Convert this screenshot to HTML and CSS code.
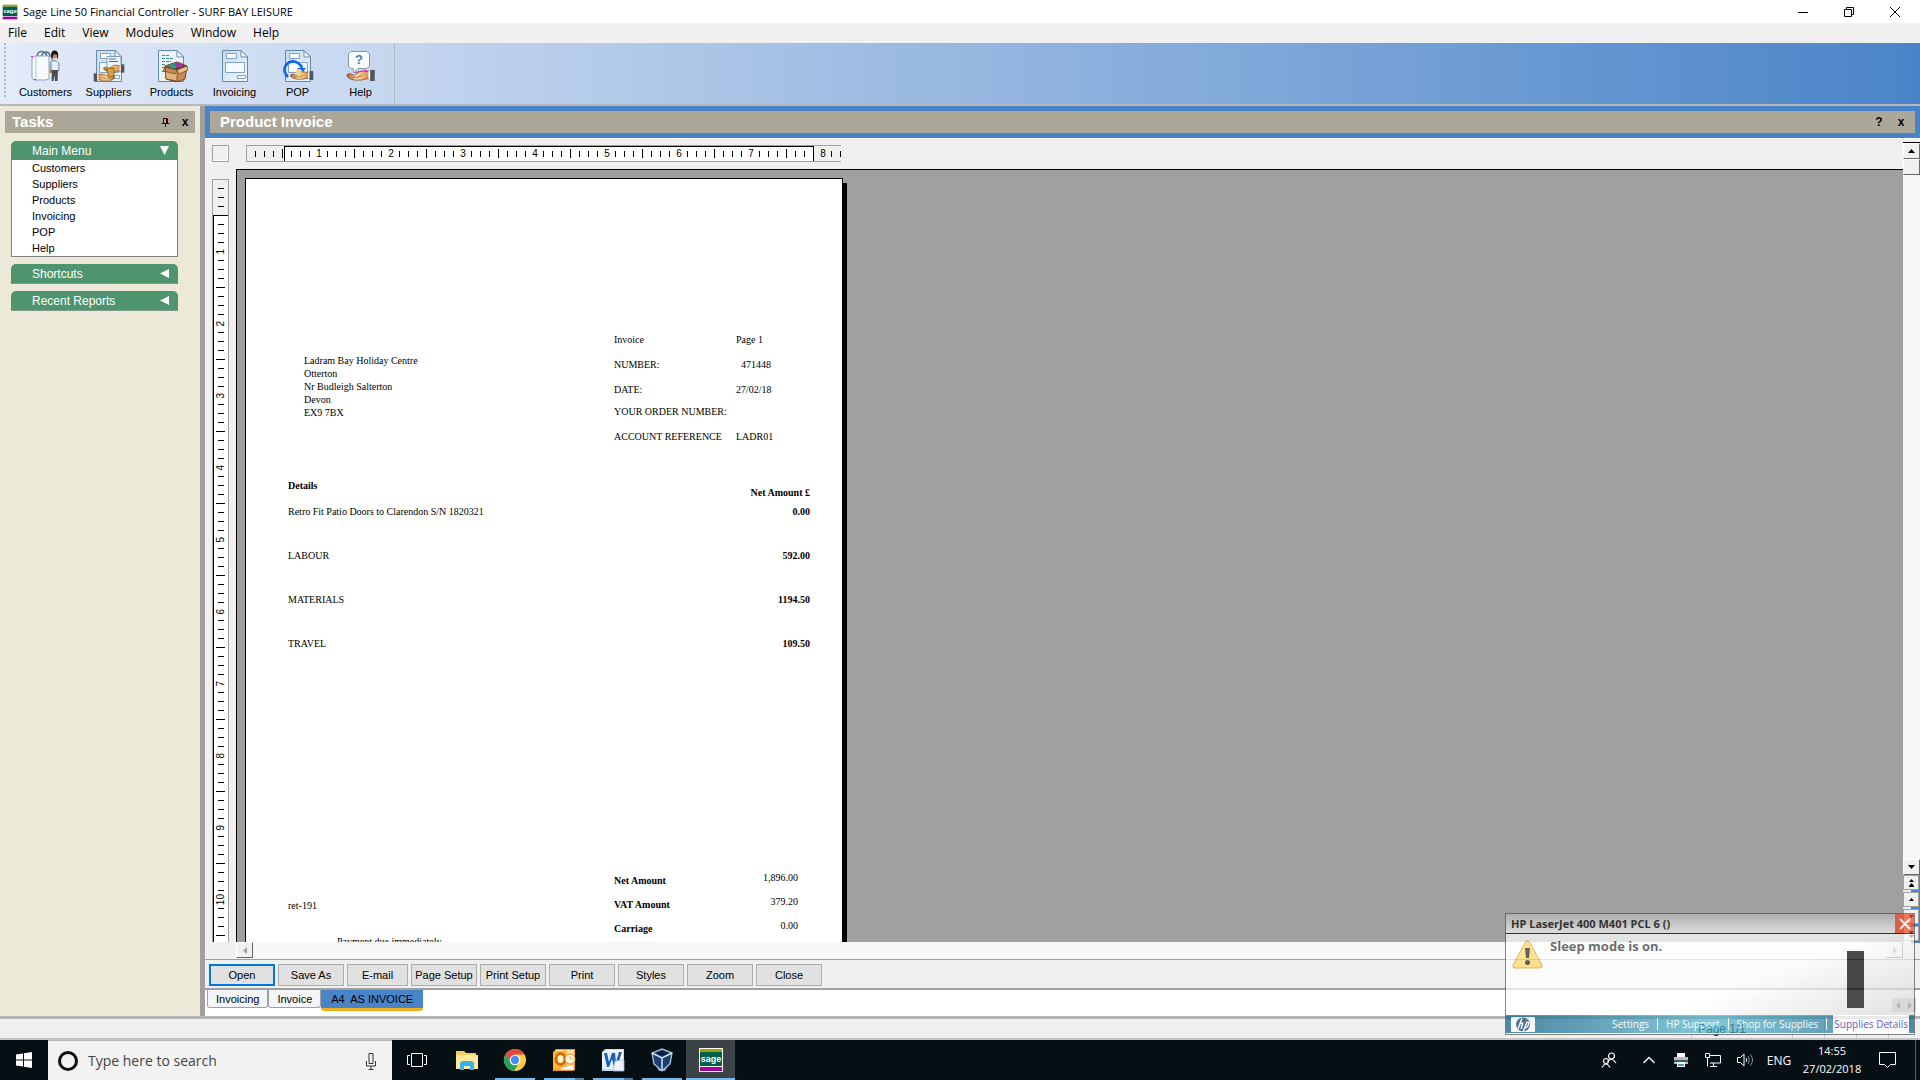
FILE: index.html
```html
<!DOCTYPE html>
<html lang="en">
<head>
  <meta charset="UTF-8" />
  <title>Sage Line 50 Financial Controller - SURF BAY LEISURE</title>
  <link rel="stylesheet" href="styles.css">
</head>
<body>

  <!-- shared icon parts -->
  <svg class="defs" width="0" height="0" aria-hidden="true">
    <defs>
      <linearGradient id="sheetFill" x1="0" y1="0" x2="1" y2="1">
        <stop offset="0" stop-color="#c3dcee" />
        <stop offset="1" stop-color="#f1f8fc" />
      </linearGradient>
      <linearGradient id="skin" x1="0" y1="0" x2="1" y2="0">
        <stop offset="0" stop-color="#a8541c" />
        <stop offset="0.4" stop-color="#ffe2ae" />
        <stop offset="1" stop-color="#d98a42" />
      </linearGradient>
      <symbol id="sheet" viewBox="0 0 32 32">
        <path d="M3.500 .5H22l6.500 6.500V31.500H3.500z" fill="url(#sheetFill)" stroke="#6488a8" />
        <path d="M22 .5V7h6.500z" fill="#fff" stroke="#6488a8" />
        <path d="M7.500 3.500h10v5h-10zM6.500 12.500h19v10h-19zM18.500 25.500h8v3h-8z" fill="#f4fafd" stroke="#7fa3c4" />
      </symbol>
      <symbol id="hand" viewBox="0 0 32 12">
        <path d="M1 7Q0 4 4 4L9 6 14 2Q18 0 25 2V9Q16 12 9 11 3 10 1 7z" fill="url(#skin)" stroke="#7c4116" stroke-width=".8" />
        <path d="M6 8q6 1 11-2" fill="none" stroke="#8b481b" stroke-width=".8" />
        <path d="M24 2l2-1v9l-2-1z" fill="#fff" />
        <path d="M26 0h5v12h-5z" fill="#53545e" />
      </symbol>
      <symbol id="sage" viewBox="0 0 24 24">
        <path fill="#fff" d="M0 0h24v24H0z" />
        <path fill="#a2a100" d="M1 1h22v3H1z" />
        <path fill="#00604a" d="M1 4h22v14H1z" />
        <path fill="#a000a0" d="M1 19h22v4H1z" />
        <text x="12" y="14" text-anchor="middle" font-family="Liberation Sans, sans-serif" font-size="9" font-weight="700" fill="#fff">sage</text>
      </symbol>
    </defs>
  </svg>

  <header class="titlebar">
    <svg class="app-icon"><use href="#sage" /></svg>
    <span class="title">Sage Line 50 Financial Controller - SURF BAY LEISURE</span>
    <button class="win-btn" aria-label="Minimise"><svg width="12" height="12"><path d="M1 6.500h10" stroke="#000" /></svg></button>
    <button class="win-btn" aria-label="Restore"><svg width="12" height="12"><path d="M1.500 3.500h7v7h-7zM3.500 3.500v-2h7v7h-2" fill="none" stroke="#000" /></svg></button>
    <button class="win-btn" aria-label="Close"><svg width="12" height="12"><path d="M1 1l10 10M11 1L1 11" stroke="#000" /></svg></button>
  </header>

  <nav class="menubar">
    <a href="#">File</a><a href="#">Edit</a><a href="#">View</a><a href="#">Modules</a><a href="#">Window</a><a href="#">Help</a>
  </nav>

  <div class="toolbar">
    <span class="grip"></span>
    <button class="tool">
      <svg viewBox="0 0 32 32">
        <path d="M7 8Q7 1 12 1.500T17 8M11 8Q12 2 16 2t4 5" fill="none" stroke="#577087" stroke-width="1.500" />
        <path d="M2 8l4-2h13v23l-3 1H4l-2-2z" fill="#f7fafd" stroke="#8da5bd" />
        <path d="M6 7v22" stroke="#b5c6d8" />
        <path d="M1 6.500h2M4 29.500h2" stroke="#f0f" />
        <path d="M24 10l5 3v8l-2-1v-6h-5v6l-2 1v-9z" fill="#bccbe0" stroke="#6a7b94" stroke-width=".7" />
        <path d="M22 12h6v9h-6z" fill="#e8eef8" />
        <path d="M22 20h6l-.5 11h-2.500l-.5-6-1 6h-2z" fill="#4a4c55" />
        <path d="M20 20h2v3h-2z" fill="#b5672b" />
        <circle cx="24.500" cy="5.500" r="3" fill="#d08a5c" />
        <path d="M21 6q0-6 4-5.500Q29 1 28 7l-1 3V5l-3-1-1 2-1 5z" fill="#20130e" />
      </svg>
      Customers
    </button>
    <button class="tool">
      <svg viewBox="0 0 32 32">
        <use href="#sheet" />
        <path d="M14 6.500h14V21H14z" fill="#eef5fb" stroke="#7d9ec0" />
        <path d="M16 9h7M16 11.500h9" stroke="#2e74bc" />
        <use href="#hand" x="10" y="14" width="22" height="9" />
        <path d="M13 20l3-2h5v10h-6v-6z" fill="#d5a23b" stroke="#8d5d14" />
        <use href="#hand" x="0" y="23" width="22" height="9" transform="translate(22 0) scale(-1 1)" />
      </svg>
      Suppliers
    </button>
    <button class="tool">
      <svg viewBox="0 0 32 32">
        <path d="M2.500 .5H21L27.500 7V31.500H2.500z" fill="#e9f4fb" stroke="#6488a8" />
        <path d="M21 .5V7h6.500z" fill="#fff" stroke="#6488a8" />
        <path d="M6 5.500h8M6 8.500h12M6 11.500h9M6 14.500h4M6 17.500h4M6 21.500h3" stroke="#3c83c0" stroke-dasharray="3 1" />
        <path d="M9 16l12-4 10 4-2 13-8 3-11-3z" fill="#c88b54" stroke="#6c3f1b" />
        <path d="M10 17l11-4 9 3-8 4z" fill="#613a1e" />
        <ellipse cx="17" cy="16.500" rx="4" ry="2.500" fill="#1ba08e" />
        <ellipse cx="23" cy="15" rx="3.500" ry="2.500" fill="#a633a8" />
        <path d="M9 17l12 3v11l-11-2zM9 17l-2 4 12 3 2-4z" fill="#e4b380" stroke="#7b4a22" stroke-width=".8" />
        <path d="M21 20l10-4 1 4-9 4z" fill="#eabf90" stroke="#7b4a22" stroke-width=".8" />
      </svg>
      Products
    </button>
    <button class="tool">
      <svg viewBox="0 0 32 32"><use href="#sheet" /></svg>
      Invoicing
    </button>
    <button class="tool">
      <svg viewBox="0 0 32 32">
        <use href="#sheet" />
        <path d="M6 27Q0 21 4 15q5-6 12-2 3 2 4 5" fill="none" stroke="#0b63f6" stroke-width="2.500" />
        <path d="M15 18h9l-4 5z" fill="#0b63f6" />
        <use href="#hand" x="8" y="20" width="24" height="11" />
        <circle cx="17" cy="22" r="3" fill="#f5d67b" />
      </svg>
      POP
    </button>
    <button class="tool">
      <svg viewBox="0 0 32 32">
        <path d="M6 1.500h16l2.500 2.500v12L22 18.500H13L9 23l-1-4.500H6L3.500 16V4z" fill="#fbfdff" stroke="#8196ab" />
        <text x="14" y="14" text-anchor="middle" font-family="Liberation Sans, sans-serif" font-size="13" font-weight="700" fill="#3184b5">?</text>
        <path d="M10 22.500l12-2" stroke="#f0f" />
        <use href="#hand" x="1" y="20" width="30" height="11" />
      </svg>
      Help
    </button>
    <span class="tool-sep"></span>
  </div>

  <div class="workspace">
    <aside class="tasks">
      <div class="caption">
        <h2>Tasks</h2>
        <button class="cap-btn" aria-label="Pin"><svg width="9" height="10"><path d="M2.500 6V1.500h4V6M.5 6.500h8M4.500 7v3M5.500 2v4" fill="none" stroke="#400" /></svg></button>
        <button class="cap-btn">x</button>
      </div>
      <section class="group open">
        <button class="group-head">Main Menu<svg width="9" height="9"><path d="M0 0h9L4.500 9z" fill="#fff" /></svg></button>
        <ul>
          <li><a href="#">Customers</a></li>
          <li><a href="#">Suppliers</a></li>
          <li><a href="#">Products</a></li>
          <li><a href="#">Invoicing</a></li>
          <li><a href="#">POP</a></li>
          <li><a href="#">Help</a></li>
        </ul>
      </section>
      <section class="group">
        <button class="group-head">Shortcuts<svg width="9" height="9"><path d="M9 0v9L0 4.500z" fill="#fff" /></svg></button>
      </section>
      <section class="group">
        <button class="group-head">Recent Reports<svg width="9" height="9"><path d="M9 0v9L0 4.500z" fill="#fff" /></svg></button>
      </section>
    </aside>

    <main class="report">
      <div class="caption-frame">
        <div class="caption">
          <h1>Product Invoice</h1>
          <button class="cap-btn">?</button>
          <button class="cap-btn">x</button>
        </div>
      </div>

      <div class="preview">
        <div class="corner"></div>
        <div class="ruler ruler-h">
          <span class="lead"></span>
          <span class="inch"><b>1</b></span>
          <span class="inch"><b>2</b></span>
          <span class="inch"><b>3</b></span>
          <span class="inch"><b>4</b></span>
          <span class="inch"><b>5</b></span>
          <span class="inch"><b>6</b></span>
          <span class="inch"><b>7</b></span>
          <span class="inch"><b>8</b></span>
        </div>
        <div class="ruler ruler-v">
          <span class="lead"></span>
          <span class="inch"><b>1</b></span>
          <span class="inch"><b>2</b></span>
          <span class="inch"><b>3</b></span>
          <span class="inch"><b>4</b></span>
          <span class="inch"><b>5</b></span>
          <span class="inch"><b>6</b></span>
          <span class="inch"><b>7</b></span>
          <span class="inch"><b>8</b></span>
          <span class="inch"><b>9</b></span>
          <span class="inch"><b>10</b></span>
          <span class="inch"></span>
        </div>

        <div class="canvas">
          <article class="paper">
            <div class="inv-head">
              <address>
                Ladram Bay Holiday Centre<br>
                Otterton<br>
                Nr Budleigh Salterton<br>
                Devon<br>
                EX9 7BX
              </address>
              <dl class="meta">
                <dt>Invoice</dt><dd>Page 1</dd>
                <dt>NUMBER:</dt><dd class="number">471448</dd>
                <dt>DATE:</dt><dd>27/02/18</dd>
                <dt>YOUR ORDER NUMBER:</dt><dd></dd>
                <dt>ACCOUNT REFERENCE</dt><dd>LADR01</dd>
              </dl>
            </div>
            <table class="lines">
              <thead>
                <tr><th>Details</th><th>Net Amount £</th></tr>
              </thead>
              <tbody>
                <tr><td>Retro Fit Patio Doors to Clarendon S/N 1820321</td><td>0.00</td></tr>
                <tr><td>LABOUR</td><td>592.00</td></tr>
                <tr><td>MATERIALS</td><td>1194.50</td></tr>
                <tr><td>TRAVEL</td><td>109.50</td></tr>
              </tbody>
            </table>
            <div class="inv-foot">
              <div class="notes">
                <p>ret-191</p>
                <p class="terms">Payment due immediately</p>
              </div>
              <dl class="totals">
                <dt>Net Amount</dt><dd>1,896.00</dd>
                <dt>VAT Amount</dt><dd>379.20</dd>
                <dt>Carriage</dt><dd>0.00</dd>
              </dl>
            </div>
          </article>
        </div>

        <div class="scroll-v">
          <button class="sb" aria-label="Scroll up"><svg width="7" height="4"><path d="M0 4h7L3.500 0z" /></svg></button>
          <span class="sb thumb"></span>
          <span class="track"></span>
          <button class="sb" aria-label="Scroll down"><svg width="7" height="4"><path d="M0 0h7L3.500 4z" /></svg></button>
          <div class="pager">
            <button class="pg" aria-label="First page"><svg width="5" height="8"><path d="M0 3h5L2.500 0zM0 7h5L2.500 4zM0 7h5v1H0z" /></svg></button>
            <button class="pg" aria-label="Previous page"><svg width="5" height="3"><path d="M0 3h5L2.500 0z" /></svg></button>
            <button class="pg" aria-label="Next page"><svg width="5" height="3"><path d="M0 0h5L2.500 3z" /></svg></button>
            <button class="pg" aria-label="Last page"><svg width="5" height="8"><path d="M0 1h5L2.500 4zM0 5h5L2.500 8z" /></svg></button>
          </div>
        </div>
        <div class="scroll-h">
          <button class="sb" aria-label="Scroll left"><svg width="4" height="7"><path d="M4 0v7L0 3.500z" fill="#a0a0a0" /></svg></button>
          <span class="track"></span>
          <button class="sb" aria-label="Scroll right"><svg width="4" height="7"><path d="M0 0v7l4-3.500z" fill="#a0a0a0" /></svg></button>
        </div>
      </div>

      <div class="actions">
        <button class="default">Open</button>
        <button>Save As</button>
        <button class="short">E-mail</button>
        <button>Page Setup</button>
        <button>Print Setup</button>
        <button>Print</button>
        <button>Styles</button>
        <button>Zoom</button>
        <button>Close</button>
      </div>

      <nav class="tabs">
        <a href="#" class="tab">Invoicing</a>
        <a href="#" class="tab">Invoice</a>
        <a href="#" class="tab active">A4&nbsp; AS INVOICE</a>
        <span class="tab-nav">
          <button aria-label="Previous tab"><svg width="4" height="7"><path d="M4 0v7L0 3.500z" fill="#555" /></svg></button>
          <button aria-label="Next tab"><svg width="4" height="7"><path d="M0 0v7l4-3.500z" fill="#555" /></svg></button>
        </span>
      </nav>
    </main>
  </div>

  <footer class="statusbar">
    <span class="page-no">Page 1/1</span>
    <span class="cell"></span><span class="cell"></span><span class="cell"></span><span class="cell"></span>
  </footer>

  <div class="taskbar">
    <button class="start" aria-label="Start">
      <svg width="16" height="16"><path d="M0 2.500l7-1v6H0zM8 1.300L16 0v7.500H8zM0 8.500h7v6l-7-1zM8 8.500h8V16l-8-1.300z" fill="#fff" /></svg>
    </button>
    <div class="search">
      <svg width="20" height="20"><circle cx="10" cy="10" r="8.500" fill="none" stroke="#111" stroke-width="3" /></svg>
      <input type="text" placeholder="Type here to search" aria-label="Type here to search">
      <svg width="12" height="18"><path d="M4 1.500h4v10H4zM1.500 9v5h9V9M6 14v3.500M3.500 17.500h5" fill="none" stroke="#333" /></svg>
    </div>
    <button class="task" aria-label="Task view">
      <svg width="20" height="14"><path d="M4.500 .5h11v13h-11zM3 2.500H.5v9H3M17 2.500h2.500v9H17" fill="none" stroke="#fff" /></svg>
    </button>
    <button class="task" aria-label="File Explorer">
      <svg width="24" height="22"><path d="M2 2h8l2 2h10v16H2z" fill="#f5cf63" /><path d="M2 6h22v14H2z" fill="#ffe79b" /><path d="M6 21v-7l2-2h10l2 2v7h-4v-4h-6v4z" fill="#34b3ea" /></svg>
    </button>
    <button class="task run" aria-label="Chrome">
      <svg width="24" height="24">
        <circle cx="12" cy="12" r="11" fill="#ffcd40" />
        <path d="M2.500 6.500A11 11 0 0 1 21.500 6.500H12L7 14.500z" fill="#de4b3e" />
        <path d="M2.500 6.500L7.500 15 12 16.500 16 15l-5 8A11 11 0 0 1 2.500 6.500z" fill="#1da261" />
        <circle cx="12" cy="12" r="5.300" fill="#fff" /><circle cx="12" cy="12" r="4.200" fill="#4a8af4" />
      </svg>
    </button>
    <button class="task run multi" aria-label="Outlook">
      <svg width="24" height="24">
        <path d="M4 1h19v21l-2 1H1V4z" fill="#f59b14" /><path d="M4 2h18v18H4z" fill="#fde3a4" /><path d="M1 4l14-2v20L1 21z" fill="#f9b73d" />
        <ellipse cx="8.500" cy="11" rx="4.500" ry="5.500" fill="#fff3d0" stroke="#d66a00" stroke-width="3" />
        <circle cx="18" cy="11" r="5" fill="#fff7e2" stroke="#e78b1b" /><path d="M18 8v3h3M8 20l14-4v6H8z" fill="#fff" stroke="#e89a2b" stroke-width=".8" />
      </svg>
    </button>
    <button class="task run multi" aria-label="Word">
      <svg width="24" height="24">
        <path d="M4 1h19v22H1V4z" fill="#bfd9f4" /><path d="M5 2h17v19H5z" fill="#fff" /><path d="M1 4l17-2v18L1 21z" fill="#e6f1fc" />
        <path d="M3 5h3l2 9 3-9h3l1 9 3-10h3l-5 15h-3l-2-8-3 8H6z" fill="#1c5eb4" />
        <path d="M14 13l9-1v11H12z" fill="#edf4fc" stroke="#9ab9da" stroke-width=".8" />
      </svg>
    </button>
    <button class="task run" aria-label="VirtualBox">
      <svg width="22" height="24">
        <path d="M1 5l10-4 10 4-2 11-8 7-8-7z" fill="#1c3f70" stroke="#b8cce4" stroke-width="1.300" />
        <path d="M1 5l10 5 10-5M11 10v13" fill="none" stroke="#d4e2f2" stroke-width="1.500" />
        <path d="M5 5l6-2 6 2-6 3z" fill="#0a1d3b" />
        <path d="M5 18l6 5 6-5-3 5H8z" fill="#92a9c4" />
      </svg>
    </button>
    <button class="task run current" aria-label="Sage Line 50">
      <svg width="24" height="24"><use href="#sage" /></svg>
    </button>

    <div class="tray">
      <button aria-label="People"><svg width="16" height="16"><g fill="none" stroke="#fff" stroke-width="1.200"><circle cx="10.500" cy="4" r="3" /><path d="M6.500 10q4-6 8.500 1" /><circle cx="5" cy="9" r="2.500" /><path d="M1 15.500q4-7 8 0" /></g></svg></button>
      <button aria-label="Show hidden icons"><svg width="12" height="8"><path d="M.5 7L6 1.500 11.500 7" fill="none" stroke="#fff" stroke-width="1.300" /></svg></button>
      <button aria-label="Printer"><svg width="16" height="16"><path d="M4 1h8v5H4z" fill="#fff" /><path d="M1 5h14v7H1z" fill="#b9bcc0" /><path d="M1 8h14v2H1z" fill="#4d5359" /><path d="M4 10h8v5H4z" fill="#fff" /><path d="M5 12h6v2H5z" fill="#409cca" /></svg></button>
      <button aria-label="Network"><svg width="16" height="14"><path d="M5 2.500h10.500v7.500H5M8.500 10v3M5 13.500h7M.5 .5h4v4h-4zM2.500 5v8.500" fill="none" stroke="#fff" /></svg></button>
      <button aria-label="Volume"><svg width="17" height="14"><path d="M.5 4.500h3l3.500-3.500v12L3.500 9.500h-3zM9 5q1.500 2 0 4" fill="none" stroke="#fff" /><path d="M11 3q3 4 0 8M13.500 1.500q4 5.500 0 11" fill="none" stroke="#8b9094" /></svg></button>
      <button class="lang">ENG</button>
      <button class="clock">14:55<br>27/02/2018</button>
      <button class="notify" aria-label="Notifications"><svg width="17" height="16"><path d="M.5 .5h16v12h-5l-3 3-3-3h-5z" fill="none" stroke="#fff" /></svg></button>
      <span class="peek"></span>
    </div>
  </div>

  <!-- printer popup -->
  <div class="popup">
    <div class="popup-title">
      <span>HP LaserJet 400 M401 PCL 6 ()</span>
      <button aria-label="Dismiss"><svg width="12" height="12"><path d="M1 1l10 10M11 1L1 11" stroke="#fff" stroke-width="2" /></svg></button>
    </div>
    <div class="popup-body">
      <svg width="31" height="29"><path d="M13.500 2q2-2.500 4 0L30 25q1 3-2 3H3q-3 0-2-3z" fill="#ffd964" stroke="#d99a2b" /><path d="M13 8h5l-1 10h-3z" fill="#222" /><circle cx="15.500" cy="22.500" r="2.500" fill="#222" /></svg>
      <p>Sleep mode is on.</p>
      <span class="level"></span>
    </div>
    <div class="popup-foot">
      <svg width="24" height="15">
        <rect width="24" height="15" rx="1" fill="#fff" />
        <circle cx="12" cy="7.500" r="7" fill="#0d4270" />
        <path d="M11 1L7 12M9 7q3-2 2.500 0L10 12M16 5l-4 10M15.500 5.500q3-1 2 2-1.500 4-4 3" fill="none" stroke="#fff" stroke-width="1.300" />
      </svg>
      <a href="#">Settings</a>
      <a href="#">HP Support</a>
      <a href="#">Shop for Supplies</a>
      <a href="#" class="hot">Supplies Details</a>
    </div>
  </div>

</body>
</html>
```
FILE: styles.css
```css
* { box-sizing: border-box; }
body { margin: 0; height: 100vh; display: flex; flex-direction: column; overflow: hidden; font-family: "Liberation Sans", Arial, sans-serif; font-size: 11px; color: #000; background: #f0f0f0; }
button { font: inherit; color: inherit; padding: 0; margin: 0; border: 0; background: none; }
a { color: inherit; text-decoration: none; }
h1, h2, p, ul, dl, dd { margin: 0; padding: 0; }
svg { display: block; flex: none; }
.defs { position: absolute; }

/* window chrome */
.titlebar { flex: none; display: flex; align-items: center; height: 23px; padding: 0 2px; background: #fff; font-family: "Open Sans", sans-serif; }
.app-icon { width: 16px; height: 16px; }
.title { flex: 1; margin-left: 5px; }
.win-btn { width: 46px; height: 21px; display: flex; justify-content: center; align-items: center; }
.menubar { flex: none; display: flex; gap: 17px; height: 20px; padding-left: 8px; font-family: "Open Sans", sans-serif; font-size: 12px; line-height: 20px; background: #f0f0f0; }

.toolbar { flex: none; display: flex; height: 63px; padding-left: 4px; background: linear-gradient(to right, #e4ebf9, #4a84c8); border-bottom: 2px solid #b8b8b8; }
.grip { width: 2px; height: 56px; margin-right: 8px; background: repeating-linear-gradient(#b4b9c6 0 2px, transparent 2px 4px); }
.tool { width: 63px; padding-top: 7px; display: flex; flex-direction: column; align-items: center; gap: 3px; line-height: 14px; }
.tool svg { width: 32px; height: 32px; }
.tool-sep { width: 1px; margin-left: 2px; background: #b8b8b8; }

.workspace { flex: 1; min-height: 0; display: flex; }
.caption { display: flex; align-items: center; height: 22px; padding-left: 7px; background: #aca899; }
.caption h1, .caption h2 { flex: 1; font-size: 15px; line-height: 22px; color: #fff; }
.cap-btn { width: 20px; display: flex; justify-content: center; font-size: 12px; font-weight: bold; }

/* task pane */
.tasks { flex: none; width: 205px; padding: 5px; background: #ece9d8; border-right: 5px solid #a0a0a0; }
.group { margin: 7px 17px 0 6px; }
.group.open { margin-top: 8px; }
.group-head { display: flex; justify-content: space-between; align-items: center; width: 100%; height: 20px; padding: 0 9px 0 21px; background: #4d946f; color: #fff; font-size: 12px; border-radius: 5px 5px 0 0; border-bottom: 1px solid #7d9a8a; }
.open .group-head { height: 19px; border-bottom: 0; }
.group ul { list-style: none; padding-left: 20px; background: #fff; border: 1px solid #808080; border-top: 0; }
.group li { line-height: 16px; }

/* report window */
.report { flex: 1; min-width: 0; display: flex; flex-direction: column; }
.caption-frame { padding: 5px; background: #4a84c8; }
.caption-frame .caption { padding: 0 3px 0 10px; }
.caption-frame .cap-btn { width: 22px; }
.preview { flex: 1; min-height: 0; display: grid; grid-template-columns: 31px 1fr 17px; grid-template-rows: 30px 1fr 17px; background: #f0f0f0; border-top: 1px solid #fff; }
.corner { width: 17px; height: 17px; margin: 6px 0 0 7px; border: 1px solid #a0a0a0; box-shadow: inset -1px -1px #fff; }

.ruler { display: flex; overflow: hidden; font-size: 10px; }
.ruler b { font-weight: normal; line-height: 10px; }
.ruler-h { width: 595px; height: 17px; margin: 6px 0 0 10px; border: 1px solid #a0a0a0; border-right: 0;
  background: linear-gradient(#000, #000) 37px 0 / 530px 1px no-repeat, linear-gradient(to right, #f0f0f0 37px, #000 37px 38px, #fff 38px 566px, #000 566px 567px, #f0f0f0 567px); }
.ruler-h .lead, .ruler-h .inch { flex: none; width: 72px; text-align: center; line-height: 15px;
  background: linear-gradient(#000, #000) right / 1px 9px no-repeat, linear-gradient(to right, transparent 8px, #000 8px) right / 9px 6px repeat-x; }
.ruler-h .lead { width: 36px; }
.ruler-h b { display: inline-block; padding: 0 2px; background: #fff; }
.ruler-h .inch:last-child b { background: #f0f0f0; }
.ruler-v { flex-direction: column; width: 17px; margin: 10px 0 0 7px; border: 1px solid #a0a0a0; border-bottom: 0;
  background: linear-gradient(#000, #000) 0 35px / 1px 100% no-repeat, linear-gradient(#f0f0f0 35px, #000 35px 36px, #fff 36px); }
.ruler-v .lead, .ruler-v .inch { flex: none; height: 72px; display: flex; justify-content: center; align-items: center;
  background: linear-gradient(#000, #000) bottom / 9px 1px no-repeat, linear-gradient(transparent 8px, #000 8px) bottom / 6px 9px repeat-y; }
.ruler-v .lead { height: 36px; }
.ruler-v b { writing-mode: vertical-rl; transform: rotate(180deg); background: #fff; padding: 2px 0; }

.canvas { overflow: hidden; padding: 8px 0 0 8px; background: #a0a0a0; border-top: 1px solid #000; border-left: 1px solid #000; }
.scroll-v { grid-column: 3; grid-row: 1 / 4; display: flex; flex-direction: column; margin-top: 3px; border-top: 1px solid #000; }
.scroll-h { grid-column: 2; grid-row: 3; display: flex; }
.sb { flex: none; width: 17px; height: 16px; display: flex; justify-content: center; align-items: center; background: #f0f0f0; border: 1px solid #fff; border-right-color: #696969; border-bottom-color: #696969; }
.track { flex: 1; background: repeating-conic-gradient(#fff 0 25%, #f0f0f0 0 50%) 0 0 / 2px 2px; }
.pager { flex: none; height: 84px; display: flex; flex-direction: column; gap: 2px; background: linear-gradient(to right, #f0f0f0 8px, #4a84c8 8px) top / 100% 68px no-repeat; }
.pg { height: 15px; width: 16px; display: flex; justify-content: center; align-items: center; background: #f0f0f0; border: 1px solid #a0a0a0; }

/* invoice sheet */
.paper { width: 598px; height: 844px; padding-top: 155px; background: #fff; border: 1px solid #000; box-shadow: 4px 5px #000; font-family: "Liberation Serif", "Times New Roman", serif; font-size: 10px; line-height: 12px; }
.inv-head { display: grid; grid-template-columns: 310px 1fr; height: 146px; padding-left: 58px; }
address { margin-top: 20px; font-style: normal; line-height: 13px; }
.meta { display: grid; grid-template-columns: 122px 1fr; grid-template-rows: 25px 25px 22px 25px 12px; }
.meta .number { padding-left: 5px; }
.lines { width: 522px; margin-left: 42px; border-collapse: collapse; }
.lines th, .lines td { padding: 0; text-align: left; }
.lines th { height: 19px; vertical-align: top; }
.lines td { height: 44px; padding-top: 7px; vertical-align: top; }
.lines th:last-child, .lines td:last-child { text-align: right; font-weight: bold; }
.lines th:last-child { vertical-align: bottom; }
.inv-foot { display: grid; grid-template-columns: 326px 184px; margin: 197px 0 0 42px; }
.notes { padding-top: 28px; }
.terms { margin: 24px 0 0 49px; }
.totals { display: grid; grid-template-columns: 1fr 1fr; grid-auto-rows: 24px; }
.totals dt { padding-top: 3px; font-weight: bold; }
.totals dd { text-align: right; }

.actions { flex: none; display: flex; gap: 3px; height: 29px; padding: 4px 4px 0; border-top: 1px solid #a0a0a0; background: #f0f0f0; }
.actions button { width: 66px; height: 22px; background: #e1e1e1; border: 1px solid #adadad; }
.actions .short { width: 61px; }
.actions .default { border: 2px solid #0078d7; }
.tabs { flex: none; display: flex; height: 28px; padding-left: 2px; background: #fff; border-top: 2px solid #a0a0a0; }
.tab { height: 18px; padding: 0 8px; line-height: 18px; background: #f3f5f9; border: 1px solid #a0a0a0; border-top: 0; border-radius: 0 0 3px 3px; }
.tab.active { height: 21px; padding: 0 10px; background: #4a84c8; border: 0; border-bottom: 3px solid #f0b020; }
.tab-nav { display: flex; height: 14px; margin: 8px 4px 0 auto; }
.tab-nav button { width: 12px; display: flex; justify-content: center; align-items: center; background: #d4d4d4; }

.statusbar { flex: none; display: flex; justify-content: flex-end; height: 24px; border-top: 3px solid #b4b4b4; border-bottom: 2px solid #c4c4c4; background: #f0f0f0; }
.page-no { width: 101px; padding-left: 6px; border-left: 1px solid #c8c8c8; font-size: 12px; line-height: 20px; }
.statusbar .cell { width: 32px; border-left: 1px solid #c8c8c8; }

/* taskbar */
.taskbar { flex: none; display: flex; height: 40px; background: #060f14; color: #fff; font-family: "Open Sans", sans-serif; }
.start { width: 48px; display: flex; justify-content: center; align-items: center; }
.search { display: flex; align-items: center; width: 344px; padding: 0 15px 0 10px; background: #f2f2f2; border-top: 1px solid #b8b8b8; }
.search input { flex: 1; min-width: 0; margin-left: 10px; padding: 0; border: 0; background: none; font: 14px "Open Sans", sans-serif; }
.search input::placeholder { color: #444; opacity: 1; }
.task { width: 49px; display: flex; justify-content: center; align-items: center; }
.task.run { background: linear-gradient(#76b9ed, #76b9ed) center bottom / 40px 2px no-repeat; }
.task.multi { background: linear-gradient(to right, #76b9ed 31px, #4c7da0 31px) center bottom / 40px 2px no-repeat; }
.task.current { background: linear-gradient(#76b9ed, #76b9ed) bottom / 100% 2px no-repeat #3c4347; }
.tray { display: flex; align-items: center; margin-left: auto; font-size: 12px; }
.tray button { width: 32px; display: flex; justify-content: center; }
.tray button:first-child { width: 48px; }
.tray .lang { width: 36px; }
.tray .clock { display: block; width: 70px; font-size: 11px; line-height: 18px; text-align: center; }
.tray .notify { width: 40px; margin-right: 8px; }
.peek { width: 5px; height: 40px; border-left: 1px solid #5a6064; }

/* printer popup, fading out over the window */
.popup { position: fixed; right: 5px; bottom: 45px; width: 410px; height: 122px; display: flex; flex-direction: column; padding-bottom: 1px; opacity: 0.7; background: #fff; border: 1px solid #505050; font-family: "Open Sans", sans-serif; }
.popup-title { display: flex; justify-content: space-between; height: 20px; padding-left: 5px; font-size: 11px; font-weight: bold; line-height: 20px; background: linear-gradient(#b4b4b4, #f5f5f5); border-bottom: 1px solid #000; }
.popup-title button { width: 19px; display: flex; justify-content: center; align-items: center; background: #f0451f; }
.popup-body { flex: 1; display: flex; align-items: flex-start; padding: 6px 50px 6px 6px; background: linear-gradient(160deg, #fff 60%, #d4d4d4); }
.popup-body p { flex: 1; margin-left: 7px; font-size: 13px; font-weight: bold; line-height: 13px; color: #333; }
.level { width: 17px; height: 57px; margin-top: 11px; background: #000; }
.popup-foot { display: flex; align-items: center; height: 18px; padding: 0 5px; background: linear-gradient(to right, #0b5b83, #53b7cd 50%, #0b5b83); color: #fff; font-size: 10px; line-height: 18px; }
.popup-foot svg { margin-right: auto; }
.popup-foot a { padding: 0 8px; border-right: 1px solid #fff; line-height: 12px; }
.popup-foot .hot { padding: 0 1px; background: #fff; color: #2a1a9c; line-height: 18px; border: 0; }
.popup-foot a:nth-of-type(3) { margin-right: 6px; }
```
